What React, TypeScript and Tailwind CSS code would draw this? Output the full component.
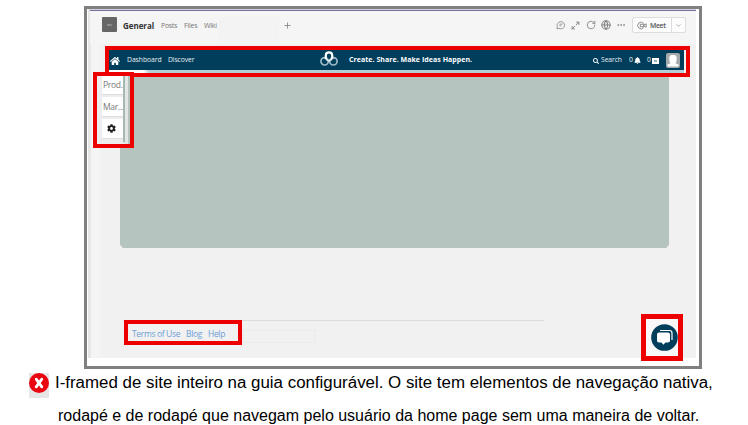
import React from "react";
import { FaHome, FaSearch, FaBell, FaCog } from "react-icons/fa";
import { Globe, Plus, ChevronDown, RotateCw, Maximize2, Ellipsis } from "lucide-react";

function KnotLogo() {
  return (
    <svg viewBox="0 0 18 15" className="h-[15px] w-[18px] shrink-0 -translate-y-[2px]" fill="none">
      <circle cx="4.600" cy="10.300" r="3.700" stroke="#9dbac8" strokeWidth="1.700" />
      <circle cx="13.400" cy="10.300" r="3.700" stroke="#9dbac8" strokeWidth="1.700" />
      <path d="M5.800 8.300V4.500Q5.800 1.300 9 1.300t3.200 3.200V8.300" stroke="#fff" strokeWidth="2.200" />
      <path d="M6 8.300l3 1.700 3-1.700" stroke="#dce8ee" strokeWidth="1.800" />
    </svg>
  );
}

function ChatIcon() {
  return (
    <svg viewBox="0 0 12 12" className="h-[10px] w-[10px]" fill="none" stroke="#888">
      <path d="M1 10.500l.7-2.200A4.600 4.300 0 1 1 3.600 10.100z" />
      <path d="M4 5h4M4 7h2.500" />
    </svg>
  );
}

function MeetIcon() {
  return (
    <svg viewBox="0 0 12 10" className="h-[9px] w-[10px]" fill="none" stroke="#777">
      <path d="M8 2.500A4 4 0 1 0 8 7.500M4 3.500h4v3H4zM8 4.500l3-1.500v4L8 5.500" />
    </svg>
  );
}

function Avatar() {
  return (
    <svg viewBox="0 0 14 15" className="h-[15px] w-[14px] shrink-0">
      <rect width="14" height="15" rx="2" fill="#a5a9ac" />
      <path d="M1.500 13.500v-2l3-1.200Q3.300 9 3.300 6.500v-2Q3.300 2 5.500 2h3q2.200 0 2.200 2.500v2q0 2.500-1.200 3.800l3 1.200v2z" fill="#fff" />
    </svg>
  );
}

function Header() {
  return (
    <header className="flex h-[33px] shrink-0 items-start bg-[#f5f5f5] pl-[12px] pt-[6px] text-[7px] leading-[17px] text-[#777]">
      <div className="flex h-[15px] w-[15px] shrink-0 items-center justify-center rounded-[1px] bg-[#666] text-[4px] text-[#ccc]">wv</div>
      <b className="ml-[6px] w-[38px] shrink-0 text-[8px] tracking-[-0.050px] text-[#333]"><span className="inline-block">General</span></b>
      <span className="w-[23px] shrink-0 tracking-[-0.300px]">Posts</span>
      <span className="w-[20px] shrink-0 tracking-[-0.200px]">Files</span>
      <span className="w-[15px] shrink-0 tracking-[-0.200px]">Wiki</span>
      <span className="h-[25px] w-[60px] shrink-0 bg-[#f3f3f3]" />
      <Plus className="ml-[4px] mt-[4px] h-[9px] w-[9px] shrink-0" strokeWidth={2} />
      <div className="ml-[264px] mt-[3px] flex w-[70px] shrink-0 items-center justify-between text-[#808080]">
        <ChatIcon />
        <Maximize2 className="h-[9px] w-[9px]" strokeWidth={2.500} />
        <RotateCw className="h-[10px] w-[10px]" />
        <Globe className="h-[10px] w-[10px]" strokeWidth={2.500} />
        <Ellipsis className="h-[10px] w-[10px]" />
      </div>
      <div className="ml-[6px] flex h-[16px] w-[54px] shrink-0 items-center rounded-[2px] border border-[#ddd] bg-[#fcfcfc]">
        <span className="flex w-[38px] items-center gap-[3px] pl-[4px] text-[6.800px] font-semibold tracking-[-0.300px] text-[#555]">
          <MeetIcon />
          Meet
        </span>
        <span className="flex h-full flex-1 items-center justify-center border-l border-[#ddd]">
          <ChevronDown className="h-[7px] w-[7px]" />
        </span>
      </div>
    </header>
  );
}

function SiteNav() {
  return (
    <nav className="ml-[9px] flex h-[20px] w-[575px] shrink-0 items-center bg-[#003e5c] pt-px text-[6.800px] font-medium text-[#e8eef2]">
      <FaHome className="ml-px mr-[8px] h-[10px] w-[10px] shrink-0 text-white" />
      <span className="-ml-px w-[41px] shrink-0 tracking-[-0.050px]">Dashboard</span>
      <span className="w-[152px] shrink-0 tracking-[-0.100px]">Discover</span>
      <KnotLogo />
      <span className="ml-[11px] w-[244px] shrink-0 whitespace-nowrap text-[7px] font-bold tracking-[0.050px] text-white">Create. Share. Make Ideas Happen.</span>
      <FaSearch className="mr-[2px] h-[6px] w-[6px] shrink-0 text-white" />
      <span className="w-[28px] shrink-0 tracking-[-0.100px]">Search</span>
      <span className="flex w-[18px] shrink-0 items-center gap-px">0<FaBell className="h-[7px] w-[7px] text-white" /></span>
      <span className="flex w-[19px] shrink-0 items-center gap-px">
        0<i className="flex h-[6px] w-[7px] items-center justify-center bg-white"><i className="h-[2px] w-[3px] bg-[#9cb0ba]" /></i>
      </span>
      <Avatar />
    </nav>
  );
}

function SideTabs() {
  return (
    <div className="flex h-full w-full bg-[#e2e6e4]">
      <div className="flex w-[26px] shrink-0 flex-col gap-[2px] bg-[#ededed] pl-[5px] text-[8.500px] leading-none tracking-[-0.300px] text-[#777]">
        <div className="flex h-[19px] items-center whitespace-nowrap border-b border-[#ddd] bg-white pl-px pt-px">Prod.</div>
        <div className="flex h-[20px] items-center whitespace-nowrap border-b border-[#ddd] bg-white pl-px pt-[2px]">Mar...</div>
        <div className="flex h-[20px] items-center justify-center border-b border-[#ddd] bg-white pr-[2px]"><FaCog className="h-[9px] w-[9px] text-[#222]" /></div>
      </div>
      <div className="h-[66px] w-[2px] shrink-0 bg-[#a7b7b2]" />
      <div className="ml-[3px] h-full w-[2px] shrink-0 bg-[#b5c4be]" />
    </div>
  );
}

function Screen() {
  return (
    <div className="relative ml-[84px] h-[363px] w-[618px] shrink-0 border-[3px] border-[#808080] bg-white font-['Open_Sans',sans-serif]">
      <div className="ml-px flex h-[349px] w-[608px] flex-col border-l-[2px] border-t border-l-[#e5e5e5] border-t-[#d4d4df] bg-[#f1f1f1]">
        <div className="h-px shrink-0 bg-[#75709f]" />
        <Header />
        <div className="flex h-[314px]">
          <div className="w-[10px] shrink-0 border-l border-[#e8e8e8] bg-[#f4f4f4]" />
          <div className="flex flex-1 flex-col pt-[6px]">
            <SiteNav />
            <div className="ml-[9px] h-[3px] w-[575px] shrink-0 bg-gradient-to-r from-white from-[6%] via-[#b4cfd6] via-[7%] to-[#b4cfd6]" />
            <div className="ml-[20px] h-[175px] w-[549px] shrink-0 bg-[#b5c4be] [clip-path:polygon(0_0,100%_0,100%_98%,99.500%_100%,0.500%_100%,0_98%)]" />
            <div className="ml-[23px] mt-[72px] h-px w-[421px] shrink-0 bg-[#dcdcdc]" />
            <footer className="ml-[32px] mt-[3px] flex h-[20px] shrink-0 items-center whitespace-nowrap text-[8.500px] tracking-[-0.350px] text-[#6f9fd6]">
              <span className="w-[54px]">Terms of Use</span>
              <span className="w-[22px]">Blog</span>
              <span className="w-[34px]">Help</span>
              <span className="mt-[5px] h-[13px] w-[74px] border border-[#ebebeb]" />
            </footer>
          </div>
        </div>
      </div>
      <div className="absolute left-[18px] top-[37px] h-[31px] w-[585px] border-[4px] border-[#ed0000]" />
      <div className="absolute left-[6px] top-[63px] h-[76px] w-[41px] border-[4px] border-[#ed0000]">
        <SideTabs />
      </div>
      <div className="absolute left-[37px] top-[311px] h-[25px] w-[118px] border-[4px] border-[#ed0000]" />
      <div className="absolute left-[554px] top-[305px] flex h-[47px] w-[42px] items-center justify-center border-[5px] border-[#ed0000] bg-[#f8f8f8]">
        <svg viewBox="0 0 27 27" className="ml-[4px] h-[27px] w-[27px] shrink-0">
          <circle cx="13.500" cy="13.500" r="13.300" fill="#003e5c" />
          <path d="M9 6.500h9.500q2.500 0 2.500 2.500v7" fill="none" stroke="#fff" strokeWidth="1.200" />
          <path d="M8 8.500h9q2 0 2 2v6q0 2-2 2h-2.500l-2.200 2.300L10.500 18.500H8q-2 0-2-2v-6q0-2 2-2z" fill="#fff" />
        </svg>
      </div>
    </div>
  );
}

export default function App() {
  return (
    <main className="flex h-[425px] w-[748px] flex-col overflow-hidden bg-white pt-[6px]">
      <Screen />
      <section className="flex pl-[29px] pt-[4px] font-['Liberation_Sans',Arial,sans-serif] text-[16px] text-black">
        <div className="h-[25px] w-[20px] shrink-0 bg-[#e6e6e6]">
          <svg viewBox="0 0 20 20" className="h-[20px] w-[20px]">
            <circle cx="10" cy="10" r="10" fill="#ea0610" />
            <path d="M7.200 6.200l5.600 7.600M12.800 6.200l-5.600 7.600" stroke="#fff" strokeWidth="2.800" strokeLinecap="round" />
          </svg>
        </div>
        <div className="whitespace-nowrap pl-[6px]">
          <p className="w-max origin-left scale-x-[1.055] leading-[20px]">I-framed de site inteiro na guia configurável. O site tem elementos de navegação nativa,</p>
          <p className="mt-[13px] pl-[3px] leading-[20px]">rodapé e de rodapé que navegam pelo usuário da home page sem uma maneira de voltar.</p>
        </div>
      </section>
    </main>
  );
}
